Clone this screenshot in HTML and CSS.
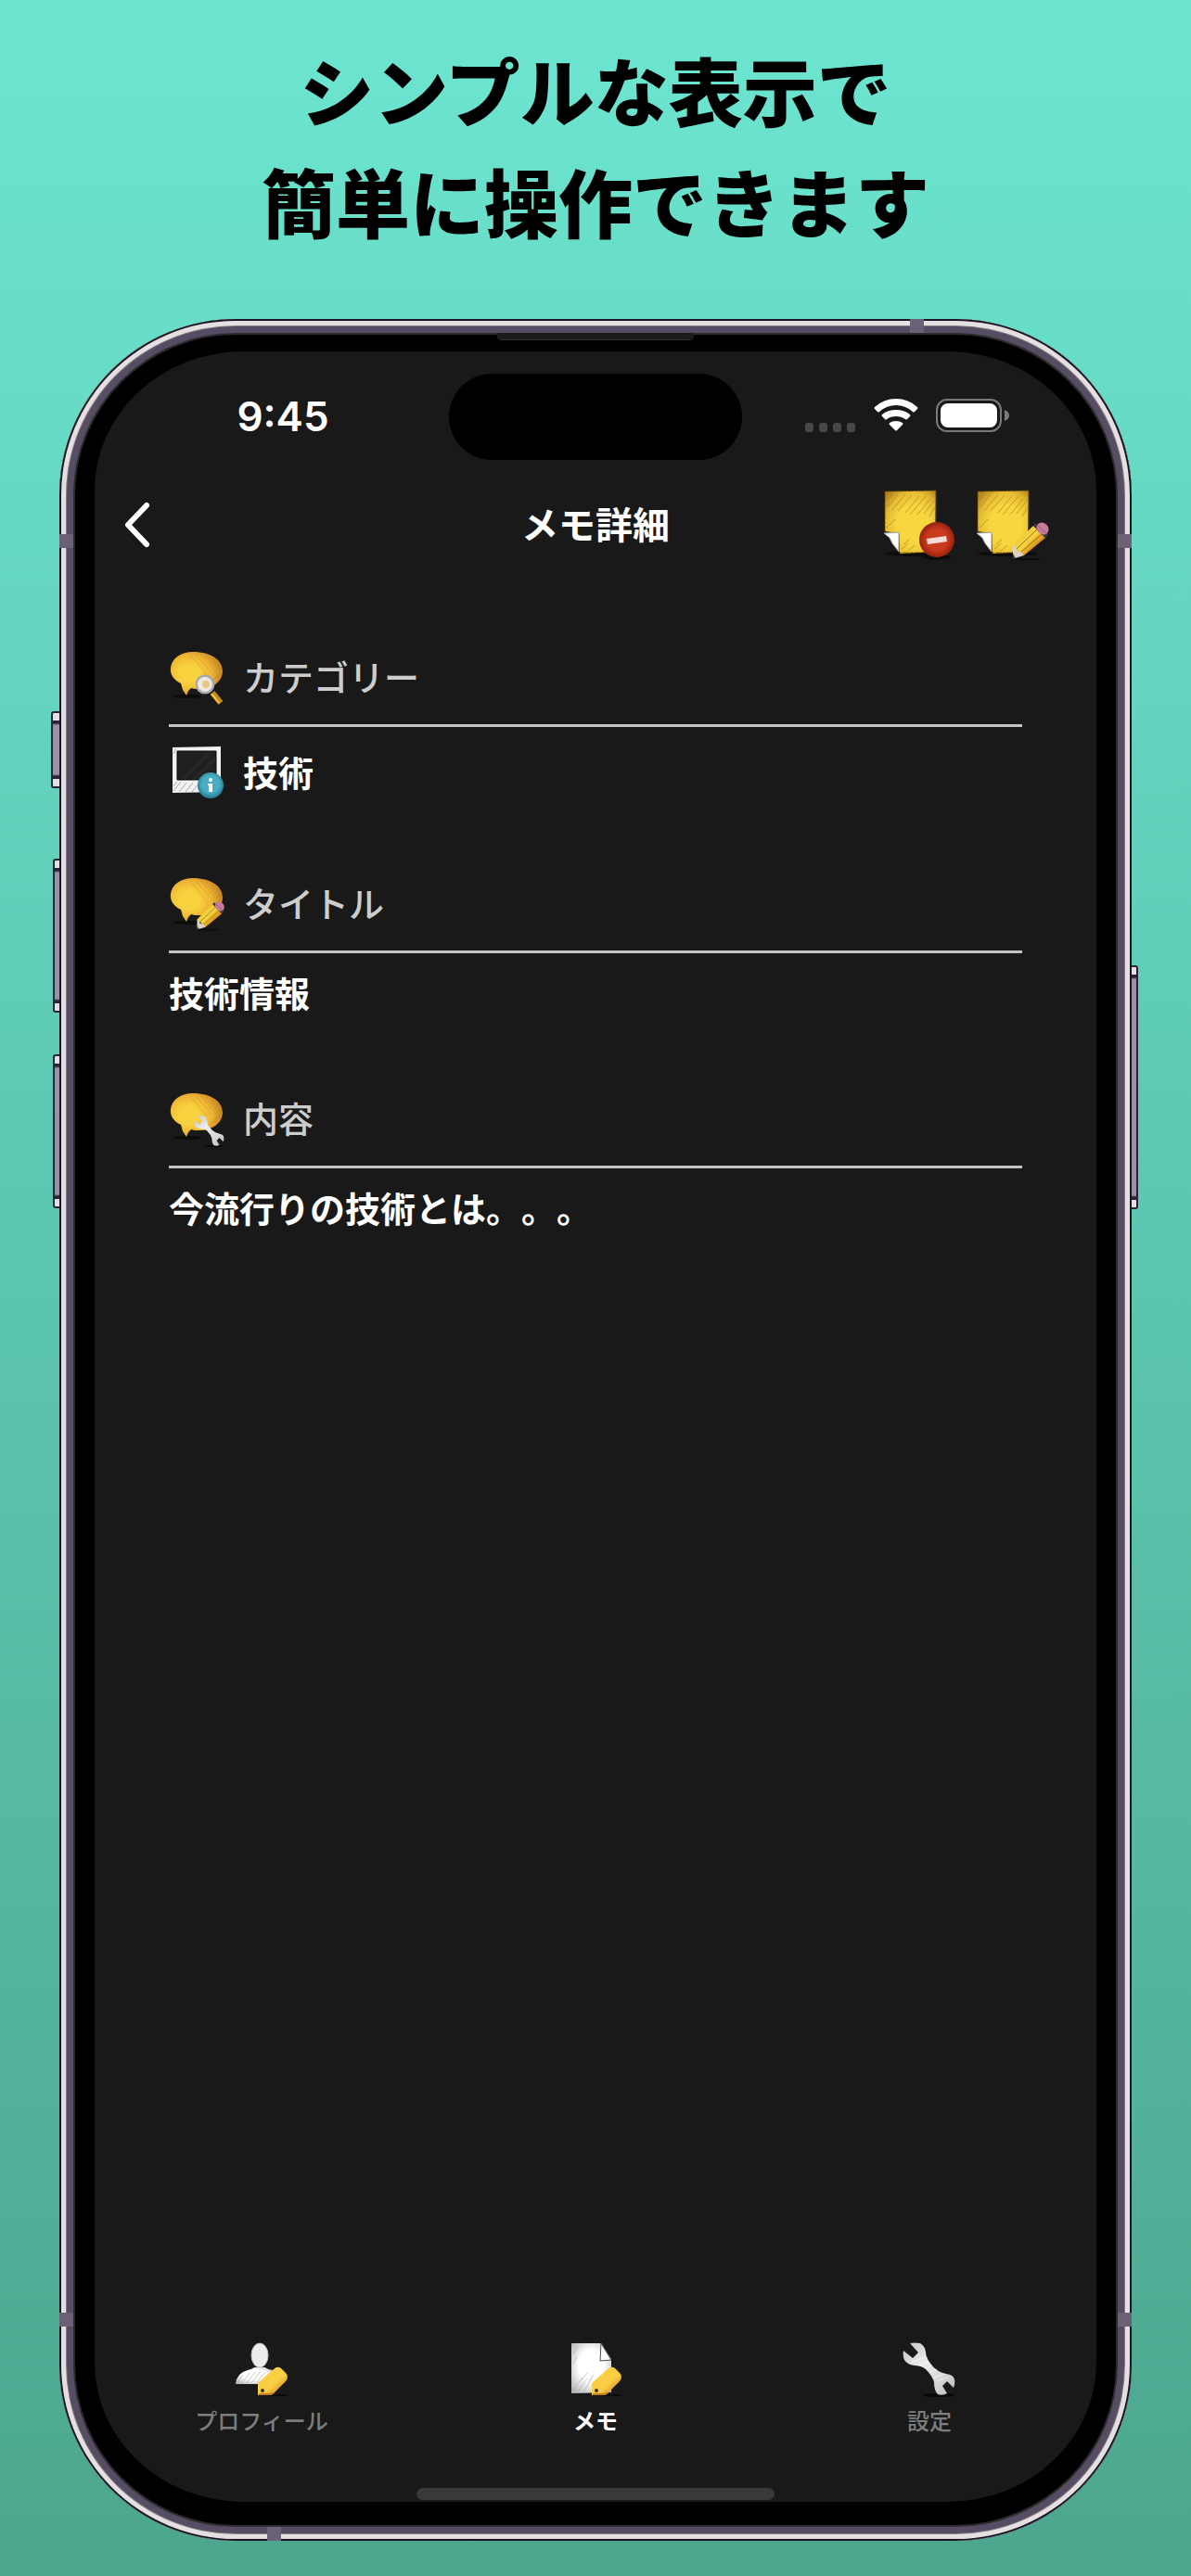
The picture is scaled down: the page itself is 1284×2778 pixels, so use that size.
FILE: index.html
```html
<!DOCTYPE html>
<html lang="ja">
<head>
<meta charset="utf-8">
<meta name="viewport" content="width=device-width, initial-scale=1">
<title>メモ詳細</title>
<link rel="stylesheet" href="styles.css">
</head>
<body>
<svg class="sprite" aria-hidden="true">
  <defs>
    <radialGradient id="g-bubble" cx="0.36" cy="0.5" r="0.66">
      <stop offset="0.3" stop-color="#f8d23e"/><stop offset="0.65" stop-color="#eeb434"/><stop offset="1" stop-color="#c07f22"/>
    </radialGradient>
    <radialGradient id="g-note" cx="0.55" cy="0.55" r="0.7">
      <stop offset="0.45" stop-color="#f7d640"/><stop offset="0.75" stop-color="#e6bc32"/><stop offset="1" stop-color="#b3821c"/>
    </radialGradient>
    <radialGradient id="g-red" cx="0.5" cy="0.5" r="0.5">
      <stop offset="0.6" stop-color="#ca3a1c"/><stop offset="1" stop-color="#962110"/>
    </radialGradient>
    <radialGradient id="g-blue" cx="0.5" cy="0.45" r="0.55">
      <stop offset="0.6" stop-color="#49aec4"/><stop offset="1" stop-color="#25788c"/>
    </radialGradient>
    <linearGradient id="g-pencil" x1="0.25" y1="0.3" x2="0.7" y2="0.7">
      <stop offset="0" stop-color="#eeca3c"/><stop offset="0.5" stop-color="#f8d440"/><stop offset="1" stop-color="#d88c18"/>
    </linearGradient>
    <linearGradient id="g-steel" x1="0" y1="0" x2="1" y2="1">
      <stop offset="0" stop-color="#c4c4c4"/><stop offset="0.4" stop-color="#ececec"/><stop offset="0.8" stop-color="#cfcfcf"/><stop offset="1" stop-color="#b4b4b4"/>
    </linearGradient>
    <linearGradient id="g-tag" x1="0.2" y1="0.2" x2="0.8" y2="0.85">
      <stop offset="0.6" stop-color="#f9ce42"/><stop offset="1" stop-color="#d89226"/>
    </linearGradient>
    <radialGradient id="g-paper" cx="0.5" cy="0.45" r="0.7">
      <stop offset="0.45" stop-color="#fff"/><stop offset="1" stop-color="#b0b0b0"/>
    </radialGradient>
  </defs>
  <symbol id="bubble" viewBox="0 0 60 60">
    <ellipse cx="20" cy="50" rx="15" ry="2" fill="#0c0c0c"/>
    <path d="M13 36C5 32 1 26 2 19C3 9 13 2 26 2C46 2 58 11 58 23C58 34 47 42 32 42C29 42 27 42 24 41L21 44L19 49L15 43Z" fill="url(#g-bubble)"/>
    <path d="M28 4l18 20M34 4l17 20M40 6l14 17M23 5l18 22M45 8l11 14M46 34l9-9M41 38l14-12" stroke="#b87a20" stroke-width="1" opacity="0.3" fill="none"/>
  </symbol>
  <symbol id="note" viewBox="0 0 80 80">
    <ellipse cx="34" cy="71" rx="32" ry="3" fill="#0c0c0c"/>
    <path d="M2 4L57 3L56 69L18 71L17 49L2 47Z" fill="url(#g-note)"/>
    <path d="M5 21L16 7M9 25L24 7M16 25L31 8M24 27L39 9M29 29L46 9M37 29L51 12M44 28L55 14M50 31L56 21M4 13l7-7M20 66l7-6M27 68l7-6M4 43l9-9M50 65l5-8M22 61l6-5" stroke="#a8811b" stroke-width="1" opacity="0.65" fill="none"/>
    <path d="M2 4L57 3M2 4V47M57 4V50M17 50V70H50" stroke="#5e420d" stroke-width="1" stroke-dasharray="7 1 3 1" opacity="0.8" fill="none"/>
    <path d="M1 49L17 48V69L10 60L7 54Z" fill="#fff" stroke="#999" stroke-width="1"/>
  </symbol>
  <symbol id="pencil" viewBox="0 0 80 80">
    <path d="M42 77h27" stroke="#0c0c0c" stroke-width="2"/>
    <path d="M62 41L75 54L52 73L40 62Z" fill="url(#g-pencil)"/>
    <path d="M66 45L44 66M71 50L48 70" stroke="#8a741a" stroke-width="1"/>
    <path d="M40 62L43 64L44 68L49 69L52 73L42 76L40 75Z" fill="#ded2bf"/>
    <path d="M40 71L43 76L40 76Z" fill="#444"/>
    <path d="M62 41L64 38L78 51L75 54Z" fill="#383838"/>
    <ellipse cx="72" cy="44" rx="7" ry="6" transform="rotate(45 72 44)" fill="#c77b9c"/>
    <path d="M66 40L77 50" stroke="#9b5c7a" stroke-width="1"/>
  </symbol>
  <symbol id="wrench" viewBox="0 0 60 60">
    <ellipse cx="40" cy="58" rx="17" ry="2" fill="#080808"/>
    <path d="M9 2Q14 1 20 2Q25 5 26 11Q26 18 32 25Q38 33 48 35Q56 36 57 41Q58 46 56 50L49 43L44 48L49 56Q44 59 39 57Q35 53 35 44Q33 37 26 30Q21 26 14 26Q6 25 3 20Q1 15 2 10L12 18L18 12Z" fill="url(#g-steel)"/>
    <path d="M8 24l17-7M17 26l12-4M26 29l7-3M30 34l8-4M35 39l12-4M37 43l14-5" stroke="#fff" stroke-width="1" opacity="0.6"/>
  </symbol>
  <symbol id="tag" viewBox="0 0 60 60">
    <path d="M38 58h19" stroke="#0a0a0a" stroke-width="2"/>
    <path d="M43 30Q47 26 51 29L56 34Q60 38 56 43L42 57Q41 58 39 58H26V46Q26 45 27 44Z" fill="url(#g-tag)"/>
    <path d="M27 57h12l3-1" stroke="#c9791d" stroke-width="2" fill="none"/>
    <circle cx="31" cy="53" r="2" fill="#3a3320"/>
  </symbol>
</svg>

<h1 class="headline">シンプルな表示で<br>簡単に操作できます</h1>

<div class="phone">
  <i class="key key-action"></i><i class="key key-up"></i><i class="key key-down"></i><i class="key key-power"></i>
  <i class="band band-lt"></i><i class="band band-rt"></i><i class="band band-lb"></i><i class="band band-rb"></i>
  <i class="band band-top"></i><i class="band band-bottom"></i>
  <i class="earpiece"></i>

  <div class="screen">
    <div class="status">
      <span class="time">9:45</span>
      <span class="island"></span>
      <span class="indicators">
        <svg width="56" height="38" viewBox="0 0 56 38" fill="#474747" aria-hidden="true">
          <rect x="0" y="27" width="9" height="10" rx="3"/><rect x="15" y="27" width="9" height="10" rx="3"/><rect x="30" y="27" width="9" height="10" rx="3"/><rect x="45" y="27" width="9" height="10" rx="3"/>
        </svg>
        <svg width="48" height="38" viewBox="0 0 48 38" fill="#fff" aria-hidden="true">
          <path d="M1 10Q11 1 24 1Q37 1 47 10Q48 11 47 12L44 15Q43 16 42 15Q34 8 24 8Q14 8 6 15Q5 16 4 15L1 12Q0 11 1 10Z"/>
          <path d="M9 18Q15 13 24 13Q33 13 39 18Q40 19 39 20L36 23Q35 24 34 23Q30 20 24 20Q18 20 14 23Q13 24 12 23L9 20Q8 19 9 18Z"/>
          <path d="M17 27Q20 25 24 25Q28 25 31 27Q32 28 31 29L25 35Q24 36 23 35L17 29Q16 28 17 27Z"/>
        </svg>
        <svg width="80" height="38" viewBox="0 0 80 38" aria-hidden="true">
          <rect x="2" y="2" width="69" height="34" rx="11" fill="none" stroke="#7a7a7a" stroke-width="2"/>
          <rect x="6" y="6" width="61" height="26" rx="8" fill="#fff"/>
          <path d="M75 13Q80 15 80 19Q80 23 75 25Z" fill="#7a7a7a"/>
        </svg>
      </span>
    </div>

    <header class="navbar">
      <button class="back" type="button" aria-label="戻る">
        <svg width="30" height="50" viewBox="0 0 30 50" aria-hidden="true"><path d="M26 4L6 25L26 46" fill="none" stroke="#fff" stroke-width="6" stroke-linecap="round" stroke-linejoin="round"/></svg>
      </button>
      <h2 class="title">メモ詳細</h2>
      <div class="actions">
        <button type="button" aria-label="メモを削除">
          <svg width="80" height="80" viewBox="0 0 80 80" aria-hidden="true">
            <use href="#note"/>
            <ellipse cx="58" cy="75" rx="15" ry="3" fill="#0c0c0c"/>
            <circle cx="58" cy="56" r="19" fill="url(#g-red)"/>
            <path d="M47 55L68 52L69 58L48 61Z" fill="#f6dcd8"/>
          </svg>
        </button>
        <button type="button" aria-label="メモを編集">
          <svg width="80" height="80" viewBox="0 0 80 80" aria-hidden="true"><use href="#note"/><use href="#pencil"/></svg>
        </button>
      </div>
    </header>

    <main class="content">
      <section class="field">
        <h3 class="label">
          <svg width="60" height="60" viewBox="0 0 60 60" aria-hidden="true">
            <use href="#bubble"/>
            <path d="M47 46L56 57" stroke="#c98a1c" stroke-width="6"/><path d="M46 47L54 57" stroke="#f2cc4a" stroke-width="2"/>
            <circle cx="39" cy="37" r="9" fill="#f3ead6" stroke="#a9a9a9" stroke-width="3"/>
            <circle cx="39" cy="37" r="7" fill="none" stroke="#e8e8e8" stroke-width="2"/><circle cx="40" cy="37" r="4" fill="#e8c58a"/>
          </svg>
          カテゴリー
        </h3>
        <p class="value value-icon">
          <svg width="60" height="60" viewBox="0 0 60 60" aria-hidden="true">
            <path d="M4 2L56 1V50L4 51ZM9 6V37H51V6Z" fill="#f1f1f1" fill-rule="evenodd"/>
            <path d="M9 6H51V37H9Z" fill="#202020" stroke="#080808" stroke-width="1"/>
            <path d="M16 36L44 8M27 36L50 14" stroke="#272727" stroke-width="3"/>
            <path d="M5 49l8-10M11 50l8-10M18 50l8-10M25 50l7-9M5 9l3-6M5 44l4-5" stroke="#aaa" stroke-width="1"/>
            <circle cx="45" cy="43" r="14" fill="url(#g-blue)"/>
            <circle cx="45" cy="37" r="2" fill="#fff"/><path d="M42 41H47V50H43V43H42Z" fill="#fff"/>
          </svg>
          技術
        </p>
      </section>
      <section class="field">
        <h3 class="label">
          <svg width="60" height="60" viewBox="0 0 60 60" aria-hidden="true"><use href="#bubble"/><use href="#pencil" width="61" height="61" y="-1"/></svg>
          タイトル
        </h3>
        <p class="value">技術情報</p>
      </section>
      <section class="field">
        <h3 class="label">
          <svg width="60" height="60" viewBox="0 0 60 60" aria-hidden="true"><use href="#bubble"/><use href="#wrench" x="26" y="25" width="35" height="35"/></svg>
          内容
        </h3>
        <p class="value">今流行りの技術とは。。。</p>
      </section>
    </main>

    <nav class="tabs">
      <a href="#profile">
        <svg width="60" height="60" viewBox="0 0 60 60" aria-hidden="true">
          <path d="M2 46Q3 34 15 31Q20 30 22 28H34Q36 30 42 31L34 46Z" fill="url(#g-paper)"/>
          <ellipse cx="28" cy="15" rx="9" ry="13" fill="#ececec" stroke="#c4c4c4" stroke-width="1"/>
          <path d="M4 44l6-8M9 45l8-11M14 45l9-12M19 45l10-13M25 44l9-11" stroke="#999" stroke-width="1" opacity="0.5"/>
          <use href="#tag"/>
        </svg>
        プロフィール
      </a>
      <a href="#memo" class="current" aria-current="page">
        <svg width="60" height="60" viewBox="0 0 60 60" aria-hidden="true">
          <path d="M4 2H36L47 19V55L4 56Z" fill="url(#g-paper)"/>
          <path d="M36 2L35 21L47 20Z" fill="#fff" stroke="#4a4a4a" stroke-width="1"/>
          <path d="M6 53l10-14M11 54l10-14M17 54l9-13M15 42l6-8M22 44l6-8M6 14l5-9M6 24l4-8" stroke="#aaa" stroke-width="1" opacity="0.6"/>
          <use href="#tag"/>
        </svg>
        メモ
      </a>
      <a href="#settings">
        <svg width="60" height="60" viewBox="0 0 60 60" aria-hidden="true"><use href="#wrench"/></svg>
        設定
      </a>
    </nav>
    <div class="home"></div>
  </div>
</div>
</body>
</html>
```
FILE: styles.css
```css
* {
  box-sizing: border-box;
}

html {
  height: 100%;
}

body {
  margin: 0;
  min-height: 100vh;
  padding: 35px 64px 38px;
  display: flex;
  flex-direction: column;
  gap: 69px;
  background: linear-gradient(#6ce5d0, #4ca68d);
  font-family: "Noto Sans CJK JP", sans-serif;
  text-spacing-trim: space-all;
  color: #fff;
}

h1, h2, h3, p {
  margin: 0;
}

svg {
  display: block;
  flex: none;
}

button {
  display: block;
  padding: 0;
  border: 0;
  background: none;
  color: inherit;
  font: inherit;
}

.sprite {
  position: absolute;
  width: 0;
  height: 0;
}

.headline {
  color: #000;
  font-size: 80px;
  font-weight: 900;
  line-height: 120px;
  text-align: center;
}

/* device frame */
.phone {
  position: relative;
  flex: 1;
  display: flex;
  padding: 35px 38px 42px;
  border-radius: 190px;
  background: #000;
  box-shadow:
    inset 0 0 0 2px #1a1625,
    inset 0 0 0 7px #e4e0e1,
    inset 0 0 0 8px #86797f,
    inset 0 0 0 15px #564d65,
    inset 0 0 0 17px #2c2b2d;
}

.key {
  position: absolute;
  right: 100%;
  width: 7px;
  border: 2px solid #2a2336;
  border-right: 0;
  border-radius: 3px 0 0 3px;
  background: linear-gradient(#e4dfe4 8px, #2a2336 8px, #2a2336 11px, #9a90a8 13px, #9a90a8 calc(100% - 13px), #2a2336 calc(100% - 11px), #2a2336 calc(100% - 8px), #e4dfe4 calc(100% - 8px));
}

.key-action {
  top: 423px;
  width: 9px;
  height: 83px;
}

.key-up {
  top: 582px;
  height: 166px;
}

.key-down {
  top: 793px;
  height: 166px;
}

.key-power {
  top: 697px;
  right: auto;
  left: 100%;
  height: 263px;
  border: 2px solid #2a2336;
  border-left: 0;
  border-radius: 0 3px 3px 0;
}

.band {
  position: absolute;
  width: 15px;
  height: 15px;
  background: #6b6177;
}

.band-lt { top: 232px; left: 0; }
.band-rt { top: 232px; right: 0; }
.band-lb { bottom: 231px; left: 0; }
.band-rb { bottom: 231px; right: 0; }
.band-top { top: 0; right: 224px; }
.band-bottom { bottom: 0; left: 224px; }

.earpiece {
  position: absolute;
  top: 15px;
  left: 50%;
  width: 212px;
  height: 8px;
  margin-left: -106px;
  border-radius: 0 0 5px 5px;
  background: #1b1b1b;
  border-bottom: 1px solid #303030;
}

.screen {
  flex: 1;
  display: flex;
  flex-direction: column;
  overflow: hidden;
  border-radius: 160px / 150px;
  background: #191919;
}

/* status bar */
.status {
  display: grid;
  grid-template-columns: 1fr 316px 1fr;
  align-items: center;
  padding-top: 24px;
}

.time {
  padding: 0 0 2px 24px;
  text-align: center;
  font: 600 44px/48px Inter, sans-serif;
}

.island {
  height: 93px;
  border-radius: 47px;
  background: #000;
}

.indicators {
  display: flex;
  justify-content: flex-end;
  gap: 18px;
  padding: 0 94px 4px 0;
}

/* navigation bar */
.navbar {
  display: grid;
  grid-template-columns: 1fr auto 1fr;
  align-items: center;
  height: 140px;
  padding: 0 50px 0 30px;
}

.title {
  padding: 0 0 4px 20px;
  font-size: 40px;
  font-weight: 700;
  line-height: 56px;
}

.actions {
  display: flex;
  justify-content: flex-end;
  gap: 20px;
}

/* memo fields */
.content {
  flex: 1;
  display: flex;
  flex-direction: column;
  gap: 81px;
  padding: 65px 80px;
}

.label {
  display: flex;
  gap: 20px;
  padding-bottom: 20px;
  border-bottom: 3px solid #c4c4c4;
  color: #cdcdcd;
  font-size: 38px;
  font-weight: 500;
  line-height: 56px;
}

.value {
  padding: 18px 0 2px;
  font-size: 38px;
  font-weight: 700;
  line-height: 48px;
}

.value-icon {
  display: flex;
  gap: 20px;
  padding: 20px 0 0;
  line-height: 56px;
}

/* tab bar */
.tabs {
  display: grid;
  grid-template-columns: repeat(3, 1fr);
}

.tabs a {
  display: flex;
  flex-direction: column;
  align-items: center;
  gap: 10px;
  padding-bottom: 2px;
  color: #7d7d7d;
  font-size: 24px;
  font-weight: 500;
  line-height: 30px;
  text-decoration: none;
}

.tabs .current {
  color: #fff;
  font-weight: 700;
}

.home {
  align-self: center;
  width: 386px;
  height: 13px;
  margin: 56px 0 2px;
  border-radius: 7px;
  background: #393939;
}
```
